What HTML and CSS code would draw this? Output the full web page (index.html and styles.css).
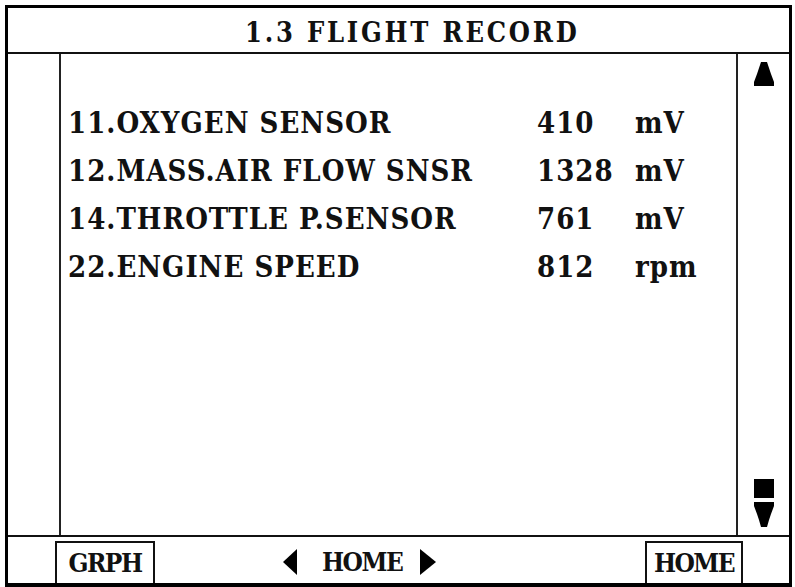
FILE: index.html
```html
<!DOCTYPE html>
<html>
<head>
<meta charset="utf-8">
<link rel="stylesheet" href="styles.css">
</head>
<body>
<div class="frame">
  <div class="title">1.3 FLIGHT RECORD</div>
  <div class="main">
    <div class="gutter"></div>
    <div class="content">
      <div class="row"><span class="label">11.OXYGEN SENSOR</span><span class="value">410</span><span class="unit">mV</span></div>
      <div class="row"><span class="label">12.MASS.AIR FLOW SNSR</span><span class="value">1328</span><span class="unit">mV</span></div>
      <div class="row"><span class="label">14.THROTTLE P.SENSOR</span><span class="value">761</span><span class="unit">mV</span></div>
      <div class="row"><span class="label">22.ENGINE SPEED</span><span class="value">812</span><span class="unit">rpm</span></div>
    </div>
    <div class="scroll">
      <svg class="arrow-up" width="20" height="24" viewBox="0 0 20 24"><polygon points="7,0 13,0 15,6 17,12 20,20 20,24 0,24 0,20 3,12 5,6" fill="#000"/></svg>
      <div class="scroll-bottom">
        <div class="thumb"></div>
        <svg class="arrow-down" width="20" height="25" viewBox="0 0 20 25"><polygon points="0,0 20,0 20,4 17,12 15,18 13,25 7,25 5,18 3,12 0,4" fill="#000"/></svg>
      </div>
    </div>
  </div>
  <div class="bottom">
    <div class="btn btn-grph">GRPH</div>
    <div class="nav">
      <svg class="tri" width="14" height="26" viewBox="0 0 14 26"><polygon points="14,0 14,26 0,13" fill="#000"/></svg>
      <span class="nav-text">HOME</span>
      <svg class="tri" width="16" height="26" viewBox="0 0 16 26"><polygon points="0,0 0,26 16,13" fill="#000"/></svg>
    </div>
    <div class="btn btn-home">HOME</div>
  </div>
</div>
</body>
</html>
```

FILE: styles.css
```css
html, body {
  margin: 0;
  padding: 0;
  background: #fff;
}

body {
  font-family: "DejaVu Serif Condensed", "DejaVu Serif", serif;
  font-stretch: condensed;
  font-weight: bold;
  color: #111;
}

.frame {
  box-sizing: border-box;
  width: 787px;
  height: 582px;
  margin: 5px 0 0 5px;
  border: 3px solid #000;
  border-bottom-width: 4px;
  display: flex;
  flex-direction: column;
}

.title {
  height: 38px;
  padding: 6px 0 0 237px;
  border-bottom: 2px solid #111;
  font-size: 27px;
  letter-spacing: 2.8px;
  line-height: 38px;
  white-space: pre;
}

.main {
  height: 481px;
  border-bottom: 2px solid #111;
  display: flex;
}

.gutter {
  width: 51px;
  border-right: 2px solid #222;
}

.content {
  flex: 1;
  padding: 45px 0 0 7px;
}

.row {
  display: grid;
  grid-template-columns: 469px 98px auto;
  height: 48px;
  line-height: 48px;
  font-size: 29px;
  letter-spacing: 1px;
  white-space: pre;
}

.scroll {
  width: 53px;
  border-left: 2px solid #222;
  display: flex;
  flex-direction: column;
  justify-content: space-between;
  align-items: center;
  padding: 8px 0 8px;
  box-sizing: border-box;
}

.scroll svg {
  display: block;
}

.scroll-bottom {
  display: flex;
  flex-direction: column;
  align-items: center;
  gap: 4px;
}

.thumb {
  width: 20px;
  height: 19px;
  background: #000;
}

.bottom {
  flex: 1;
  display: flex;
  align-items: flex-end;
}

.btn {
  box-sizing: border-box;
  height: 42px;
  border: 2px solid #111;
  border-bottom: none;
  text-align: center;
  font-size: 26px;
  letter-spacing: -1.5px;
  line-height: 40px;
}

.btn-grph {
  width: 100px;
  margin-left: 47px;
}

.nav {
  display: flex;
  align-items: center;
  height: 42px;
  margin-left: 128px;
  font-size: 26px;
  letter-spacing: -1.5px;
}

.nav .tri {
  display: block;
}

.nav-text {
  width: 76px;
  margin: 0 22px 0 25px;
  text-align: center;
  white-space: nowrap;
  line-height: 40px;
}

.btn-home {
  width: 98px;
  margin-left: 209px;
}
```
